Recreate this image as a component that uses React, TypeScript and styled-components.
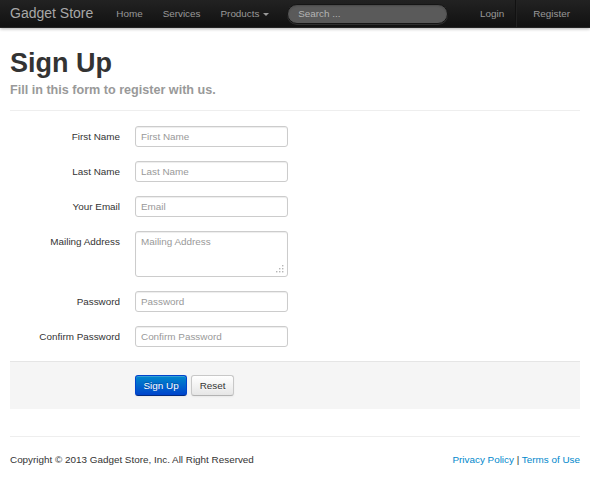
import React from 'react';
import styled, { createGlobalStyle } from 'styled-components';

const GlobalStyle = createGlobalStyle`
  html, body {
    margin: 0;
    padding: 0;
    background: #fff;
  }
  body {
    font-family: "Liberation Sans", Arial, Helvetica, sans-serif;
    font-size: 9.9px;
    line-height: 14px;
    color: #333;
  }
  * {
    box-sizing: border-box;
  }
`;

const fields = [
  { label: 'First Name', placeholder: 'First Name', type: 'text' },
  { label: 'Last Name', placeholder: 'Last Name', type: 'text' },
  { label: 'Your Email', placeholder: 'Email', type: 'email' },
  { label: 'Mailing Address', placeholder: 'Mailing Address', type: 'textarea' },
  { label: 'Password', placeholder: 'Password', type: 'password' },
  { label: 'Confirm Password', placeholder: 'Confirm Password', type: 'password' }
];

const ResizeGrip = () => (
  <Grip width="9" height="9" viewBox="0 0 9 9">
    <rect x="7" y="1" width="1.4" height="1.4" fill="#b5b5b5" />
    <rect x="4" y="4" width="1.4" height="1.4" fill="#b5b5b5" />
    <rect x="7" y="4" width="1.4" height="1.4" fill="#b5b5b5" />
    <rect x="1" y="7" width="1.4" height="1.4" fill="#b5b5b5" />
    <rect x="4" y="7" width="1.4" height="1.4" fill="#b5b5b5" />
    <rect x="7" y="7" width="1.4" height="1.4" fill="#b5b5b5" />
  </Grip>
);

export default function App() {
  return (
    <>
      <GlobalStyle />
      <Navbar>
        <NavInner>
          <Brand href="#">Gadget Store</Brand>
          <NavList>
            <NavLink href="#">Home</NavLink>
            <NavLink href="#">Services</NavLink>
            <NavLink href="#">
              Products <Caret />
            </NavLink>
          </NavList>
          <SearchForm>
            <SearchInput placeholder="Search ..." />
          </SearchForm>
          <NavRight>
            <NavLink href="#">Login</NavLink>
            <Divider />
            <NavLink href="#">Register</NavLink>
          </NavRight>
        </NavInner>
      </Navbar>

      <Container>
        <PageHeader>
          <Title>Sign Up</Title>
          <Subtitle>Fill in this form to register with us.</Subtitle>
        </PageHeader>

        <Form onSubmit={(e) => e.preventDefault()}>
          {fields.map((f) => (
            <ControlGroup key={f.label}>
              <ControlLabel>{f.label}</ControlLabel>
              {f.type === 'textarea' ? (
                <TextAreaWrap>
                  <TextArea placeholder={f.placeholder} />
                  <ResizeGrip />
                </TextAreaWrap>
              ) : (
                <Input type={f.type} placeholder={f.placeholder} />
              )}
            </ControlGroup>
          ))}

          <FormActions>
            <Button $primary type="submit">Sign Up</Button>
            <Button type="reset">Reset</Button>
          </FormActions>
        </Form>

        <Footer>
          <span>Copyright © 2013 Gadget Store, Inc. All Right Reserved</span>
          <FooterLinks>
            <FooterLink href="#">Privacy Policy</FooterLink> |{' '}
            <FooterLink href="#">Terms of Use</FooterLink>
          </FooterLinks>
        </Footer>
      </Container>
    </>
  );
}

const Navbar = styled.div`
  height: 28px;
  background: linear-gradient(to bottom, #222 0%, #111 100%);
  border-bottom: 1px solid #252525;
  box-shadow: 0 1px 3px rgba(0, 0, 0, 0.3);
`;

const NavInner = styled.div`
  display: flex;
  align-items: center;
  height: 27px;
  padding: 0 10px;
`;

const Brand = styled.a`
  font-size: 14px;
  line-height: 27px;
  color: #a8a8a8;
  text-decoration: none;
  padding-right: 13px;
`;

const NavList = styled.nav`
  display: flex;
`;

const NavLink = styled.a`
  display: flex;
  align-items: center;
  padding: 0 10px;
  line-height: 27px;
  color: #999;
  text-decoration: none;
  white-space: pre;
`;

const Caret = styled.span`
  display: inline-block;
  margin-left: 1px;
  margin-top: 1px;
  width: 0;
  height: 0;
  border-top: 3px solid #999;
  border-left: 3px solid transparent;
  border-right: 3px solid transparent;
`;

const SearchForm = styled.form`
  margin: 0 0 0 8px;
  display: flex;
`;

const SearchInput = styled.input`
  width: 161px;
  height: 20px;
  padding: 0 10px;
  border: 1px solid #151515;
  border-radius: 10px;
  background: #5a5a5a;
  color: #fff;
  font-family: inherit;
  font-size: 9.9px;
  box-shadow: inset 0 1px 2px rgba(0, 0, 0, 0.2), 0 1px 0 rgba(255, 255, 255, 0.12);
  outline: none;
  &::placeholder {
    color: #b5b5b5;
  }
`;

const NavRight = styled.div`
  display: flex;
  align-items: stretch;
  margin-left: auto;
  height: 27px;
`;

const Divider = styled.div`
  width: 2px;
  margin: 0 6px 0 1px;
  border-left: 1px solid #111;
  border-right: 1px solid #222;
`;

const Container = styled.div`
  padding: 0 10px;
`;

const PageHeader = styled.div`
  padding: 21px 0 13px;
  border-bottom: 1px solid #eee;
`;

const Title = styled.h1`
  margin: 0;
  font-size: 27px;
  line-height: 28px;
  font-weight: bold;
  color: #333;
`;

const Subtitle = styled.h4`
  margin: 6px 0 0;
  font-size: 12.6px;
  line-height: 14px;
  font-weight: bold;
  color: #999;
`;

const Form = styled.form`
  padding-top: 15px;
`;

const ControlGroup = styled.div`
  display: grid;
  grid-template-columns: 110px 153px;
  column-gap: 15px;
  align-items: start;
  margin-bottom: 14px;
`;

const ControlLabel = styled.label`
  text-align: right;
  padding-top: 3.5px;
  color: #333;
`;

const Input = styled.input`
  width: 153px;
  height: 21px;
  padding: 0 5px;
  border: 1px solid #ccc;
  border-radius: 3px;
  background: #fff;
  font-family: inherit;
  font-size: 9.9px;
  color: #555;
  box-shadow: inset 0 1px 1px rgba(0, 0, 0, 0.075);
  outline: none;
  &::placeholder {
    color: #999;
  }
`;

const TextAreaWrap = styled.div`
  position: relative;
  width: 153px;
  height: 46px;
`;

const TextArea = styled.textarea`
  display: block;
  width: 153px;
  height: 46px;
  padding: 3px 5px;
  border: 1px solid #ccc;
  border-radius: 3px;
  font-family: inherit;
  font-size: 9.9px;
  line-height: 14px;
  color: #555;
  resize: none;
  box-shadow: inset 0 1px 1px rgba(0, 0, 0, 0.075);
  outline: none;
  &::placeholder {
    color: #999;
  }
`;

const Grip = styled.svg`
  position: absolute;
  right: 4px;
  bottom: 4px;
`;

const FormActions = styled.div`
  display: flex;
  gap: 4px;
  margin-top: 0;
  padding: 13px 0 13px 125px;
  background: #f5f5f5;
  border-top: 1px solid #e5e5e5;
`;

interface ButtonProps {
  $primary?: boolean;
}

const Button = styled.button<ButtonProps>`
  height: 21px;
  padding: 0 7.5px;
  border-radius: 3px;
  font-family: inherit;
  font-size: 9.9px;
  cursor: pointer;
  color: ${(p) => (p.$primary ? '#fff' : '#333')};
  border: 1px solid ${(p) => (p.$primary ? '#0044cc' : '#c8c8c8')};
  border-bottom-color: ${(p) => (p.$primary ? '#002a80' : '#b3b3b3')};
  background: ${(p) =>
    p.$primary
      ? 'linear-gradient(to bottom, #0088cc, #0044cc)'
      : 'linear-gradient(to bottom, #ffffff, #e6e6e6)'};
  text-shadow: ${(p) =>
    p.$primary ? '0 -1px 0 rgba(0,0,0,0.25)' : '0 1px 1px rgba(255,255,255,0.75)'};
  box-shadow: inset 0 1px 0 rgba(255, 255, 255, 0.2), 0 1px 2px rgba(0, 0, 0, 0.05);
`;

const Footer = styled.footer`
  display: flex;
  justify-content: space-between;
  align-items: center;
  margin-top: 27px;
  padding-top: 16px;
  border-top: 1px solid #eee;
  color: #333;
`;

const FooterLinks = styled.div`
  white-space: pre;
`;

const FooterLink = styled.a`
  color: #0088cc;
  text-decoration: none;
`;
